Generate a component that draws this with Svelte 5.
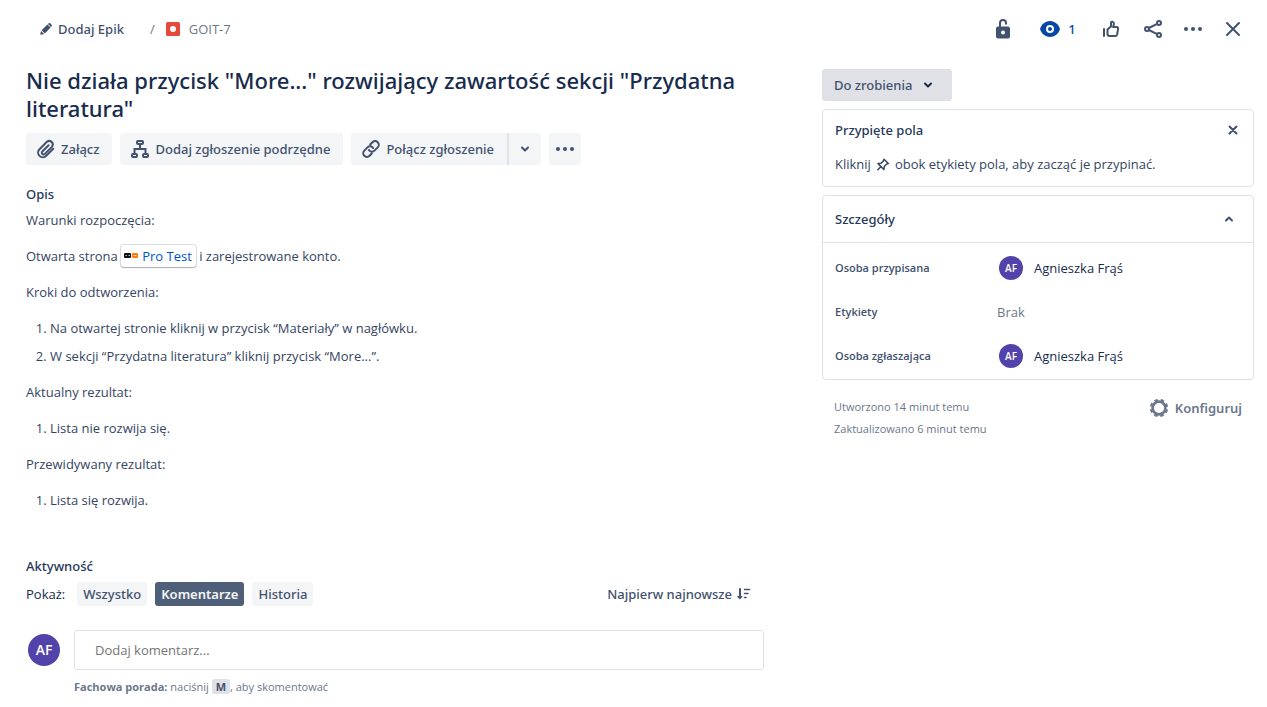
<script lang="ts">
  let comment = $state('');
  let filter = $state('Komentarze');
  const filters = ['Wszystko', 'Komentarze', 'Historia'];
</script>

{#snippet chevron(dir)}
  <svg width="24" height="24" viewBox="0 0 24 24" aria-hidden="true">
    <path d={dir === 'up' ? 'M9 13.5 12 10.5 15 13.5' : 'M9 10.5 12 13.5 15 10.5'} fill="none" stroke="currentColor" stroke-width="2" stroke-linecap="round" stroke-linejoin="round" />
  </svg>
{/snippet}

{#snippet dots()}
  <svg width="24" height="24" viewBox="0 0 24 24" fill="currentColor" aria-hidden="true">
    <circle cx="5" cy="12" r="2" /><circle cx="12" cy="12" r="2" /><circle cx="19" cy="12" r="2" />
  </svg>
{/snippet}

{#snippet person()}
  <span class="person"><span class="avatar small">AF</span>Agnieszka Frąś</span>
{/snippet}

<div class="page">
  <header>
    <nav aria-label="Ścieżka">
      <button class="plain epic">
        <svg width="16" height="16" viewBox="0 0 16 16" fill="currentColor" aria-hidden="true">
          <path d="M3.6 9.2 9.4 3.400l3.200 3.200-5.800 5.800zM10.200 2.700c.8-.8 1.700-.8 2.400-.1l.8.8c.7.7.7 1.600-.1 2.400l-.3.3L9.900 3zM3 9.900l3.100 3.100-3.100.7c-.5.1-.8-.2-.7-.7z" />
        </svg>
        Dodaj Epik
      </button>
      <span class="slash">/</span>
      <svg class="type" width="14" height="14" viewBox="0 0 14 14" aria-hidden="true">
        <rect width="14" height="14" rx="1.5" fill="#e5493a" /><circle cx="7" cy="7" r="3" fill="#fff" />
      </svg>
      <a class="key" href="#goit-7">GOIT-7</a>
    </nav>
    <div class="actions">
      <button class="icon" aria-label="Blokada">
        <svg width="24" height="24" viewBox="0 0 24 24" aria-hidden="true">
          <path d="M9 11V6a3 3 0 0 1 6 0v1.500" fill="none" stroke="currentColor" stroke-width="2" />
          <path fill="currentColor" fill-rule="evenodd" d="M7 9.500h10a2 2 0 0 1 2 2v8a2 2 0 0 1-2 2H7a2 2 0 0 1-2-2v-8a2 2 0 0 1 2-2zm5 4a2 2 0 1 0 0 4 2 2 0 0 0 0-4z" />
        </svg>
      </button>
      <button class="icon watch" aria-label="Obserwujący: 1">
        <svg width="24" height="24" viewBox="0 0 24 24" aria-hidden="true">
          <path fill="currentColor" d="M12 4c5.200 0 8.800 3.700 10 8-1.200 4.300-4.800 8-10 8S3.200 16.300 2 12c1.200-4.300 4.800-8 10-8z" />
          <circle cx="12" cy="12" r="3" fill="none" stroke="#fff" stroke-width="2" />
        </svg>
        1
      </button>
      <button class="icon like" aria-label="Lubię to">
        <svg width="24" height="24" viewBox="0 0 24 24" fill="none" stroke="currentColor" stroke-width="2" stroke-linejoin="round" stroke-linecap="round" aria-hidden="true">
          <path d="M5 12v7M8.500 12.500 12 9.500V5.800c0-1.600 2.900-1.500 2.900.8 0 1.500-.5 2.500-.9 3.400h3.700c1 0 1.600.8 1.400 1.700l-1 5.800c-.2 1-.8 1.500-1.700 1.500h-5.900c-1.200 0-2-.8-2-2z" />
        </svg>
      </button>
      <button class="icon" aria-label="Udostępnij">
        <svg width="24" height="24" viewBox="0 0 24 24" fill="none" stroke="currentColor" stroke-width="2" aria-hidden="true">
          <circle cx="6" cy="12" r="2" /><circle cx="18" cy="6" r="2" /><circle cx="18" cy="18" r="2" />
          <path d="m7.800 11 8.400-4.200M7.800 13l8.400 4.200" />
        </svg>
      </button>
      <button class="icon" aria-label="Czynności">{@render dots()}</button>
      <button class="icon" aria-label="Zamknij">
        <svg width="24" height="24" viewBox="0 0 24 24" fill="none" stroke="currentColor" stroke-width="2" stroke-linecap="round" aria-hidden="true">
          <path d="m6 6 12 12M18 6 6 18" />
        </svg>
      </button>
    </div>
  </header>

  <div class="columns">
    <main>
      <h1>Nie działa przycisk "More..." rozwijający zawartość sekcji "Przydatna literatura"</h1>

      <div class="toolbar">
        <button class="btn">
          <svg width="24" height="24" viewBox="0 0 24 24" fill="none" stroke="currentColor" stroke-width="2" stroke-linecap="round" aria-hidden="true">
            <path d="m19.300 11.800-7.100 7a4.700 4.700 0 0 1-6.700-6.600l7.600-7.600a3.600 3.600 0 0 1 5 5l-7.300 7.300a1.700 1.700 0 0 1-2.500-2.400l6.300-6.300" />
          </svg>
          Załącz
        </button>
        <button class="btn">
          <svg width="24" height="24" viewBox="0 0 24 24" fill="none" stroke="currentColor" stroke-width="2" aria-hidden="true">
            <rect x="9" y="4" width="6" height="3" rx="1" /><rect x="4" y="17" width="5" height="3" rx="1" /><rect x="15" y="17" width="5" height="3" rx="1" />
            <path d="M12 7v5M6.500 16v-4h11v4" />
          </svg>
          Dodaj zgłoszenie podrzędne
        </button>
        <div class="split">
          <button class="btn">
            <svg width="24" height="24" viewBox="0 0 24 24" fill="none" stroke="currentColor" stroke-width="2" stroke-linecap="round" aria-hidden="true">
              <path d="m11.200 7.500 2.300-2.300a3.600 3.600 0 0 1 5.200 5.200l-3.200 3.200a3.600 3.600 0 0 1-5.100 0l-.5-.6M12.800 16.500l-2.300 2.300a3.600 3.600 0 0 1-5.200-5.200l3.200-3.200a3.600 3.600 0 0 1 5.100 0l.5.6" />
            </svg>
            Połącz zgłoszenie
          </button>
          <button class="btn square" aria-label="Więcej opcji łączenia">{@render chevron('down')}</button>
        </div>
        <button class="btn square" aria-label="Więcej">{@render dots()}</button>
      </div>

      <section class="description">
        <h2>Opis</h2>
        <p>Warunki rozpoczęcia:</p>
        <p>
          Otwarta strona <a class="card-link" href="#pro-test"><svg width="16" height="16" viewBox="0 0 16 16" aria-hidden="true">
              <rect x="1" y="5" width="7" height="5" rx="1" fill="#111" /><path d="M2.500 7h1.500v1H2.500zM5.500 7H7v1H5.500z" fill="#bbb" />
              <rect x="9" y="5" width="6" height="5" rx="1" fill="#ff7a0f" /><path d="M10.500 7.500h3" stroke="#ffd0a5" />
            </svg>Pro Test</a> i zarejestrowane konto.
        </p>
        <p>Kroki do odtworzenia:</p>
        <ol>
          <li>Na otwartej stronie kliknij w przycisk “Materiały” w nagłówku.</li>
          <li>W sekcji “Przydatna literatura” kliknij przycisk “More...”.</li>
        </ol>
        <p>Aktualny rezultat:</p>
        <ol><li>Lista nie rozwija się.</li></ol>
        <p>Przewidywany rezultat:</p>
        <ol><li>Lista się rozwija.</li></ol>
      </section>

      <section class="activity">
        <h2>Aktywność</h2>
        <div class="filters">
          <span class="show">Pokaż:</span>
          {#each filters as name}
            <button class="tab" class:selected={filter === name} aria-pressed={filter === name} onclick={() => (filter = name)}>{name}</button>
          {/each}
          <button class="plain sort">
            Najpierw najnowsze
            <svg width="16" height="16" viewBox="0 0 16 16" fill="none" stroke="currentColor" stroke-width="2" stroke-linecap="round" aria-hidden="true">
              <path d="M4 3v8" /><path d="M2 10.500h4L4 12.800z" fill="currentColor" stroke-width="1" stroke-linejoin="round" />
              <path d="M8.500 3.500h5M8.500 7.500h3.500M8.500 11.500h1.500" stroke-width="1.5" />
            </svg>
          </button>
        </div>
        <div class="composer">
          <span class="avatar">AF</span>
          <div class="field">
            <input type="text" aria-label="Komentarz" placeholder="Dodaj komentarz..." bind:value={comment} />
            <p class="tip"><strong>Fachowa porada:</strong> naciśnij <kbd>M</kbd>, aby skomentować</p>
          </div>
        </div>
      </section>
    </main>

    <aside>
      <button class="status">Do zrobienia {@render chevron('down')}</button>

      <section class="panel pinned">
        <div class="panel-title">
          <h2>Przypięte pola</h2>
          <button class="icon tiny" aria-label="Odrzuć">
            <svg width="16" height="16" viewBox="0 0 16 16" fill="none" stroke="currentColor" stroke-width="2" stroke-linecap="round" aria-hidden="true">
              <path d="m4.500 4.500 7 7M11.500 4.500l-7 7" />
            </svg>
          </button>
        </div>
        <p>
          Kliknij
          <svg width="16" height="16" viewBox="0 0 16 16" fill="none" stroke="currentColor" stroke-width="1.5" stroke-linecap="round" stroke-linejoin="round" aria-hidden="true">
            <path d="M9 3.200 13.300 7.500 11.600 8.100 9.300 10.500 8.900 13.500 3 7.600 6 7.200 8.400 4.900zM5.800 10.700 2.800 13.700" />
          </svg>
          obok etykiety pola, aby zacząć je przypinać.
        </p>
      </section>

      <section class="panel">
        <button class="details-head" aria-expanded="true"><span>Szczegóły</span>{@render chevron('up')}</button>
        <dl>
          <dt>Osoba przypisana</dt>
          <dd>{@render person()}</dd>
          <dt>Etykiety</dt>
          <dd class="none">Brak</dd>
          <dt>Osoba zgłaszająca</dt>
          <dd>{@render person()}</dd>
        </dl>
      </section>

      <footer>
        <div class="dates">
          <span>Utworzono 14 minut temu</span>
          <span>Zaktualizowano 6 minut temu</span>
        </div>
        <button class="plain configure">
          <svg width="24" height="24" viewBox="0 0 24 24" fill="none" stroke="currentColor" aria-hidden="true">
            <circle cx="12" cy="12" r="6.400" stroke-width="2.600" />
            <circle cx="12" cy="12" r="8" stroke-width="2.400" stroke-dasharray="3.400 2.883" stroke-dashoffset="-1.440" />
          </svg>
          Konfiguruj
        </button>
      </footer>
    </aside>
  </div>
</div>

<style>
  :global(body) {
    margin: 0;
    background: #fff;
  }
  .page {
    box-sizing: border-box;
    padding: 13px 13px 8px 26px;
    font: 400 13px/20px 'Segoe UI', 'Open Sans', 'Noto Sans', sans-serif;
    color: #172b4d;
  }
  button,
  input {
    font: inherit;
    color: inherit;
    margin: 0;
  }
  button {
    border: 0;
    padding: 0;
    background: none;
    cursor: pointer;
    font-family: 'Segoe UI', 'Noto Sans', 'Open Sans', sans-serif;
    font-weight: 500;
    color: #42526e;
    white-space: nowrap;
  }
  svg {
    flex: none;
    display: block;
  }
  h1,
  h2,
  p,
  ol,
  dl,
  dd {
    margin: 0;
  }
  h1,
  h2 {
    font-family: 'Segoe UI', 'Noto Sans', 'Open Sans', sans-serif;
    font-weight: 500;
  }
  h2 {
    font-size: 13px;
    line-height: 20px;
    color: #253858;
  }
  header,
  nav,
  .actions {
    display: flex;
    align-items: center;
  }
  header {
    justify-content: space-between;
    height: 32px;
  }
  nav {
    padding-left: 12px;
    color: #6b778c;
  }
  .plain {
    display: flex;
    align-items: center;
    gap: 4px;
  }
  .slash {
    margin: 0 11px 0 26px;
  }
  .key {
    margin-left: 9px;
    color: #6b778c;
    text-decoration: none;
  }
  .actions {
    gap: 8px;
    padding-right: 5px;
  }
  .icon {
    display: flex;
    align-items: center;
    justify-content: center;
    width: 32px;
    height: 32px;
  }
  .like {
    margin-right: 2px;
  }
  .watch {
    width: 60px;
    gap: 6px;
    color: #0747a6;
  }
  .tiny {
    width: 16px;
    height: 16px;
  }
  .columns {
    display: grid;
    grid-template-columns: minmax(0, 738fr) minmax(0, 432fr);
    gap: 58px;
    padding-top: 21px;
  }
  h1 {
    font-size: 22px;
    line-height: 28px;
  }
  .toolbar {
    display: flex;
    gap: 8px;
    margin-top: 11px;
  }
  .btn {
    display: flex;
    align-items: center;
    justify-content: center;
    gap: 3px;
    height: 32px;
    padding: 0 13px 0 8px;
    border-radius: 3px;
    background: #f4f5f7;
  }
  .square {
    width: 32px;
    padding: 0;
  }
  .split {
    display: flex;
  }
  .split .btn:first-child {
    border-radius: 3px 0 0 3px;
  }
  .split .square {
    width: 34px;
    border-left: 2px solid #dfe1e6;
    border-radius: 0 3px 3px 0;
  }
  .description {
    margin-top: 19px;
    color: #344563;
  }
  .description h2 {
    margin-bottom: 4px;
  }
  .description p,
  .description ol {
    line-height: 24px;
    margin-bottom: 12px;
  }
  ol {
    padding-left: 24px;
  }
  li + li {
    margin-top: 4px;
  }
  .card-link {
    display: inline-flex;
    align-items: center;
    gap: 3px;
    height: 22px;
    margin-top: 1px;
    padding: 0 4px 0 2px;
    border-radius: 3px;
    box-shadow: 0 1px 1px rgba(9, 30, 66, 0.25), 0 0 1px 1px rgba(9, 30, 66, 0.15);
    color: #0052cc;
    text-decoration: none;
    vertical-align: top;
  }
  .activity {
    margin-top: 44px;
  }
  .filters {
    display: flex;
    align-items: center;
    gap: 8px;
    margin-top: 6px;
  }
  .show {
    margin-right: 4px;
  }
  .tab {
    height: 24px;
    padding: 0 6px;
    border-radius: 3px;
    background: #f4f5f7;
  }
  .tab.selected {
    background: #505f79;
    color: #f4f5f7;
    font-weight: 600;
  }
  .sort {
    margin: 0 12px 0 auto;
  }
  .composer {
    display: flex;
    gap: 14px;
    margin-top: 24px;
    padding-left: 2px;
  }
  .avatar {
    display: flex;
    flex: none;
    align-items: center;
    justify-content: center;
    width: 32px;
    height: 32px;
    margin-top: 4px;
    border-radius: 50%;
    background: #5243aa;
    color: #fff;
    font-size: 14px;
    font-weight: 600;
  }
  .avatar.small {
    width: 24px;
    height: 24px;
    margin: 0;
    font-size: 10px;
  }
  .field {
    flex: 1;
  }
  input {
    display: block;
    box-sizing: border-box;
    width: 100%;
    height: 40px;
    padding: 0 20px;
    border: 1px solid #dfe1e6;
    border-radius: 3px;
    background: #fff;
  }
  input::placeholder {
    color: #757575;
  }
  .tip {
    margin-top: 7px;
    font-size: 11px;
    color: #6b778c;
  }
  kbd {
    padding: 0 4px;
    border-radius: 3px;
    background: #dfe1e6;
    color: #42526e;
    font: inherit;
    font-weight: 700;
  }
  aside {
    display: flex;
    flex-direction: column;
    align-items: stretch;
    gap: 8px;
    padding-top: 3px;
  }
  .status {
    display: flex;
    align-items: center;
    align-self: flex-start;
    gap: 4px;
    height: 32px;
    padding: 0 12px;
    border-radius: 3px;
    background: #dfe1e6;
  }
  .status :global(svg) {
    color: #172b4d;
  }
  .panel {
    border: 1px solid #dfe1e6;
    border-radius: 4px;
  }
  .pinned {
    padding: 10px 12px 12px;
  }
  .panel-title {
    display: flex;
    align-items: center;
    justify-content: space-between;
  }
  .pinned p {
    display: flex;
    align-items: center;
    gap: 4px;
    margin-top: 14px;
    color: #344563;
  }
  .details-head {
    display: flex;
    align-items: center;
    justify-content: space-between;
    width: 100%;
    height: 47px;
    padding: 0 12px;
    border-bottom: 1px solid #dfe1e6;
    text-align: left;
    color: #253858;
  }
  .details-head :global(svg) {
    color: #42526e;
  }
  dl {
    display: grid;
    grid-template-columns: 162px 1fr;
    align-items: center;
    grid-auto-rows: 44px;
    padding: 3px 12px 1px;
  }
  dt {
    font-size: 11px;
    font-weight: 600;
    color: #42526e;
  }
  .person {
    display: flex;
    align-items: center;
    gap: 11px;
    padding-left: 2px;
  }
  .none {
    color: #6b778c;
  }
  footer {
    display: flex;
    align-items: flex-start;
    justify-content: space-between;
    padding: 8px 12px 0;
  }
  .dates {
    display: flex;
    flex-direction: column;
    gap: 2px;
    padding-top: 1px;
    font-size: 11px;
    color: #6b778c;
  }
  .configure {
    font-weight: 600;
    color: #6b778c;
  }
</style>
